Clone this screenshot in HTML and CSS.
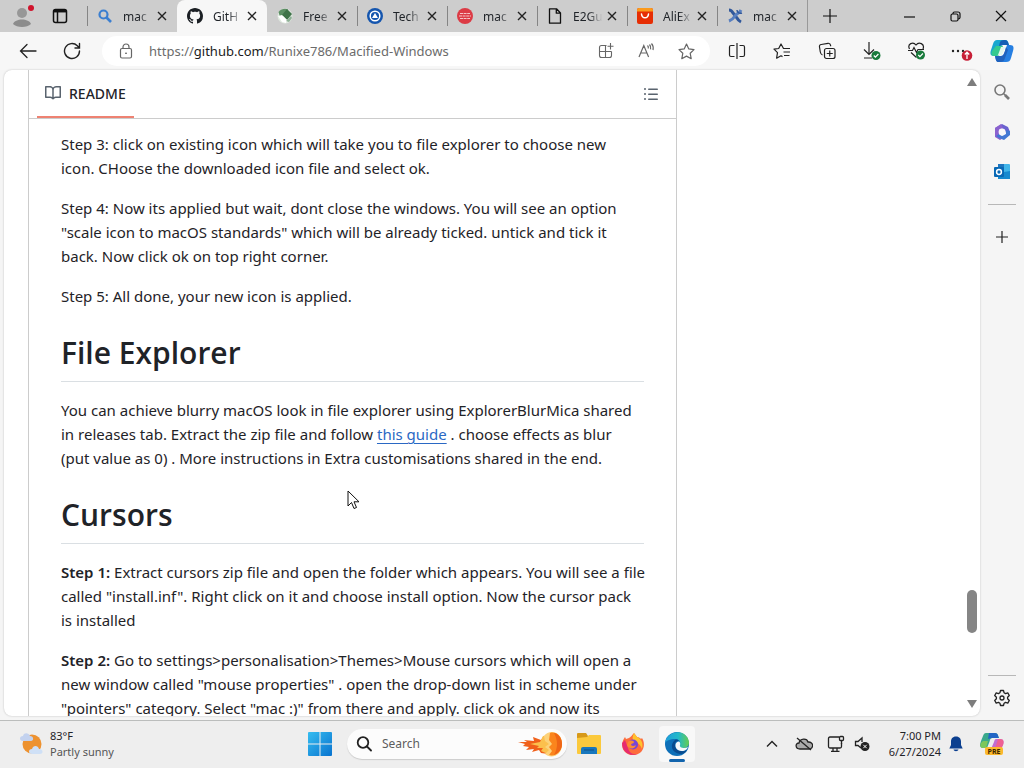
FILE: index.html
```html
<!DOCTYPE html>
<html lang="en">
<head>
<meta charset="utf-8">
<meta name="viewport" content="width=device-width, initial-scale=1">
<title>Runixe786/Macified-Windows</title>
<link rel="stylesheet" href="styles.css">
</head>
<body>
<div class="desktop">
  <header class="tabstrip">
    <button class="profile" aria-label="Profile">
      <svg width="24" height="24" viewBox="0 0 24 24"><circle cx="10" cy="9" r="5" fill="#979797"/><path d="M1 20c2-6 16-6 18 0-4 4-14 4-18 0z" fill="#8c8c8c"/><circle cx="19" cy="4" r="3" fill="#d0142c"/></svg>
    </button>
    <button class="workspace" aria-label="Tab actions">
      <svg width="16" height="16" viewBox="0 0 16 16" fill="none" stroke="#111" stroke-width="1.5"><rect x="1.5" y="1.5" width="13" height="13" rx="2"/><path d="M1.5 3.5h13M5.5 4v10" /><path d="M2 3h12" stroke-width="2.5"/></svg>
    </button>
    <nav class="tabs" aria-label="Tabs">
      <div class="tab"><svg class="favicon" viewBox="0 0 16 16" fill="none" stroke="#3c7fd0"><circle cx="6.500" cy="6.500" r="4" stroke-width="2.200"/><path d="M9.500 9.500l4.500 4.500" stroke-width="2.600"/></svg><a href="#" class="label">mac</a><button class="close" aria-label="Close tab"><svg viewBox="0 0 10 10"><path d="M1 1l8 8M9 1l-8 8"/></svg></button></div>
      <div class="tab active"><svg class="favicon" viewBox="0 0 16 16" fill="#1b1f24"><path d="M8 0C3.580 0 0 3.580 0 8c0 3.540 2.290 6.530 5.470 7.590.4.070.55-.17.55-.38 0-.19-.01-.82-.01-1.490-2.010.37-2.530-.49-2.690-.94-.09-.23-.48-.94-.82-1.130-.28-.15-.68-.52-.01-.53.63-.01 1.080.58 1.230.82.72 1.210 1.870.87 2.330.66.070-.52.28-.87.51-1.070-1.780-.2-3.640-.89-3.640-3.950 0-.87.31-1.590.82-2.150-.08-.2-.36-1.020.08-2.120 0 0 .67-.21 2.200.82.64-.18 1.320-.27 2-.27s1.360.09 2 .27c1.530-1.040 2.200-.82 2.200-.82.44 1.100.16 1.920.08 2.120.51.56.82 1.270.82 2.150 0 3.070-1.870 3.750-3.650 3.950.29.25.54.73.54 1.480 0 1.070-.01 1.930-.01 2.200 0 .21.15.46.55.38A8.010 8.010 0 0016 8c0-4.420-3.580-8-8-8z"/></svg><a href="#" class="label">GitH</a><button class="close" aria-label="Close tab"><svg viewBox="0 0 10 10"><path d="M1 1l8 8M9 1l-8 8"/></svg></button></div>
      <div class="tab"><svg class="favicon" viewBox="0 0 16 16"><circle cx="8" cy="8" r="7.500" fill="#dfe9df"/><path d="M1.500 4C4 1 8 0 11 1.500L7 8 3 9z" fill="#5c8f64"/><path d="M5 7l5-6 5 5-5 6z" fill="#3f7349"/><path d="M1 8l4 6 4 1 1-3-5-5z" fill="#fff"/><path d="M9 13l5-5 1 2-3 4z" fill="#8fb096"/></svg><a href="#" class="label">Free</a><button class="close" aria-label="Close tab"><svg viewBox="0 0 10 10"><path d="M1 1l8 8M9 1l-8 8"/></svg></button></div>
      <div class="tab"><svg class="favicon" viewBox="0 0 16 16"><circle cx="8" cy="8" r="8" fill="#1455ae"/><circle cx="8" cy="8" r="4.800" fill="none" stroke="#fff" stroke-width="1.500"/><path d="M8 5l3 5H5z" fill="#fff"/></svg><a href="#" class="label">Tech</a><button class="close" aria-label="Close tab"><svg viewBox="0 0 10 10"><path d="M1 1l8 8M9 1l-8 8"/></svg></button></div>
      <div class="tab"><svg class="favicon" viewBox="0 0 16 16"><circle cx="8" cy="8" r="8" fill="#dc3b45"/><path d="M3 5.500h10M2 8h12M3 10.500h10" stroke="#f6c5c8" stroke-width="1.200" stroke-dasharray="3 .6"/></svg><a href="#" class="label">mac</a><button class="close" aria-label="Close tab"><svg viewBox="0 0 10 10"><path d="M1 1l8 8M9 1l-8 8"/></svg></button></div>
      <div class="tab"><svg class="favicon" viewBox="0 0 16 16" fill="none" stroke="#111" stroke-width="1.300" stroke-linejoin="round"><path d="M2.500.8h7l4 4.200v10.200h-11zM9.300 1v4.200h4"/></svg><a href="#" class="label">E2Gu</a><button class="close" aria-label="Close tab"><svg viewBox="0 0 10 10"><path d="M1 1l8 8M9 1l-8 8"/></svg></button></div>
      <div class="tab"><svg class="favicon" viewBox="0 0 16 16"><rect width="16" height="16" rx="2" fill="#e62e04"/><path d="M0 2a2 2 0 012-2h12a2 2 0 012 2v1.500H0z" fill="#fb9a1c"/><path d="M4.500 6c.5 5 6.500 5 7 0" fill="none" stroke="#fff" stroke-width="1.500" stroke-linecap="round"/></svg><a href="#" class="label">AliEx</a><button class="close" aria-label="Close tab"><svg viewBox="0 0 10 10"><path d="M1 1l8 8M9 1l-8 8"/></svg></button></div>
      <div class="tab"><svg class="favicon" viewBox="0 0 16 16" fill="none"><path d="M2 2c2 0 3 1 4 3l4 5c1 2 2 3 4 4" stroke="#31589b" stroke-width="3"/><path d="M14 2c-2 4-4 3-6 6-2 3-3 4-6 5" stroke="#587fc0" stroke-width="3"/><path d="M10 2c0 2 2 4 5 3" stroke="#31589b" stroke-width="1.500"/></svg><a href="#" class="label">mac</a><button class="close" aria-label="Close tab"><svg viewBox="0 0 10 10"><path d="M1 1l8 8M9 1l-8 8"/></svg></button></div>
    </nav>
    <button class="newtab" aria-label="New tab"><svg width="14" height="14" viewBox="0 0 14 14" stroke="#111" stroke-width="1.200"><path d="M7 0v14M0 7h14"/></svg></button>
    <div class="winctl">
      <button aria-label="Minimize"><svg width="11" height="11" viewBox="0 0 11 11" stroke="#111" stroke-width="1.200"><path d="M0 6h11"/></svg></button>
      <button aria-label="Restore"><svg width="11" height="11" viewBox="0 0 11 11" fill="none" stroke="#111" stroke-width="1.200"><rect x="1" y="3" width="7" height="7" rx="1.500"/><path d="M3 3V2.500Q3 1 4.500 1H8q2 0 2 2v3.500Q10 8 8 8"/></svg></button>
      <button aria-label="Close"><svg width="12" height="12" viewBox="0 0 12 12" stroke="#111" stroke-width="1.200"><path d="M1 1l10 10M11 1L1 11"/></svg></button>
    </div>
  </header>

  <div class="toolbar">
    <button class="nav" aria-label="Back"><svg width="18" height="16" viewBox="0 0 18 16" fill="none" stroke="#222" stroke-width="1.300" stroke-linecap="round"><path d="M17 8H1.500M8 1.500L1.500 8 8 14.500"/></svg></button>
    <button class="nav" aria-label="Refresh"><svg width="18" height="18" viewBox="0 0 18 18" fill="none" stroke="#222" stroke-width="1.400" stroke-linecap="round"><path d="M16.500 9A7.500 7.500 0 1114.300 3.700L16.500 6M16.500 1.500V6H12"/></svg></button>
    <div class="address">
      <svg class="lock" width="14" height="16" viewBox="0 0 14 16" fill="none" stroke="#666" stroke-width="1.200"><rect x="1.500" y="5.500" width="11" height="9.500" rx="1.500"/><path d="M4 5.500V4a3 3 0 016 0v1.500"/><circle cx="7" cy="10.300" r=".8" fill="#333" stroke="none"/></svg>
      <div class="url">https://<b>github.com</b>/Runixe786/Macified-Windows</div>
      <button aria-label="Install app"><svg width="16" height="16" viewBox="0 0 16 16" fill="none" stroke="#666" stroke-width="1.100"><path d="M8.500 2.500h-5q-2 0-2 2v8q0 2 2 2h8q2 0 2-2v-4M7.500 2.500v12M1.500 8.500h12M12.500 0v6.500M9.500 3.200h6"/></svg></button>
      <button aria-label="Read aloud"><svg width="17" height="16" viewBox="0 0 17 16" fill="none" stroke="#666" stroke-width="1.200"><path d="M1 14L5.800 2.500 10.600 14M2.700 10h6.200M9.500 2.500c.8.700 1 1.800.8 3M11.500 1.500c1.200 1.400 1.500 3 1.100 4.800M13.500.5c1.700 2 2 4.300 1.500 6.500"/></svg></button>
      <button aria-label="Add to favorites"><svg width="17" height="17" viewBox="0 0 17 17" fill="none" stroke="#666" stroke-width="1.200" stroke-linejoin="round"><path d="M8.500 1l2.300 4.900 5.200.7-3.800 3.700 1 5.400-4.700-2.600-4.700 2.600 1-5.400L1 6.600l5.200-.7z"/></svg></button>
    </div>
    <div class="actions">
      <button aria-label="Split screen"><svg width="18" height="16" viewBox="0 0 18 16" fill="none" stroke="#222" stroke-width="1.200"><path d="M6.500 2.500H3q-1.500 0-1.500 1.500v8q0 1.500 1.500 1.500h3.500M11.500 2.500H15q1.500 0 1.500 1.500v8q0 1.500-1.500 1.500h-3.500M9 0v16"/></svg></button>
      <button aria-label="Favorites"><svg width="18" height="17" viewBox="0 0 18 17" fill="none" stroke="#222" stroke-width="1.200" stroke-linejoin="round"><path d="M17 5.500h-6.500L8 1 5.700 5.500 1 6.200l3.500 3.500-.9 5.500L8 12.800l1.500.8M10.500 9H17M11 12.500h5.500"/></svg></button>
      <button aria-label="Collections"><svg width="18" height="18" viewBox="0 0 18 18" fill="none" stroke="#222" stroke-width="1.200"><rect x="6.500" y="6.500" width="10.500" height="10" rx="2"/><path d="M11.750 8.500v6M8.750 11.500h6M4.500 13C3 12.500 2.600 11.500 2.300 10L1.500 5c-.3-1.500.4-2.300 1.700-2.500L10 1.300c1.500-.2 2.300.4 2.600 2v1"/></svg></button>
      <button aria-label="Downloads"><svg width="20" height="20" viewBox="0 0 20 20" fill="none" stroke="#222" stroke-width="1.200"><path d="M7 1v12M2 8.500L7 13.500l5-5M2 17h8"/><circle cx="14" cy="14.500" r="4.500" fill="#187a3b" stroke="none"/><path d="M11.800 14.500l1.600 1.700 3-3.200" stroke="#fff"/></svg></button>
      <button aria-label="Browser essentials"><svg width="20" height="20" viewBox="0 0 20 20" fill="none" stroke="#222" stroke-width="1.200"><path d="M2.500 8C0 3 6 0 9 4c3-4 9-1 7 4M1 9.500h4.500l1.500-3 2.500 5 1.500-3h6M4 11.500l5.500 5"/><circle cx="13.500" cy="14" r="4.500" fill="#187a3b" stroke="none"/><path d="M11.300 14l1.600 1.700 3-3.200" stroke="#fff"/></svg></button>
      <button aria-label="Settings and more"><svg width="22" height="20" viewBox="0 0 22 20"><g fill="#222"><circle cx="2" cy="10" r="1.200"/><circle cx="7" cy="10" r="1.200"/><circle cx="12" cy="10" r="1.200"/></g><circle cx="16" cy="14.500" r="5.300" fill="#c71f37"/><path d="M16 18v-6.500M13.800 13.500l2.200-2.300 2.200 2.300" fill="none" stroke="#fff" stroke-width="1.300"/></svg></button>
    </div>
    <button class="copilot" aria-label="Copilot"><svg width="24" height="24" viewBox="0 0 24 24"><path d="M7 1h8c3 0 3 2 4 5H13c-2 0-3 2-4 6l-1 3c-1 2-2 2-4 2-4 0-4-3-3-6l2-6c1-3 2-4 4-4z" fill="#19a7cf"/><path d="M6 7h7l-3 8c-1 2-3 2-5 2-4 0-4-2-3-5z" fill="#35c990"/><path d="M14 1c3 0 4 1 5 5h-6L9 7l1-4c.7-1.300 2-2 4-2z" fill="#155eb5"/><path d="M17 6h3c4 0 4 3 3 6l-2 7c-1 3-2 4-5 4H9c-3 0-3-2-4-6h6c2 0 3-2 4-5z" fill="#267fe2"/><path d="M5 17h6c2 0 3-2 4-5l1-4 2 3-3 8c-1 3-2 4-5 4H9c-3 0-3-2-4-6z" fill="#2162bd"/><path d="M11 8h4l-3 8H8z" fill="#e4f6ed"/></svg></button>
  </div>

  <div class="workarea">
    <main class="page">
      <div class="repo">
        <article class="readme">
          <div class="readme-head">
            <a href="#" class="readme-tab"><svg width="16" height="16" viewBox="0 0 16 16" fill="#59636e"><path d="M0 1.750A.75.75 0 01.75 1h4.253c1.227 0 2.317.59 3 1.501A3.743 3.743 0 0111.006 1h4.245a.75.75 0 01.75.75v10.500a.75.75 0 01-.75.75h-4.507a2.250 2.250 0 00-1.591.659l-.622.621a.75.75 0 01-1.060 0l-.622-.621A2.250 2.250 0 005.258 13H.75a.75.75 0 01-.75-.75zm7.251 10.324l.004-5.073-.002-2.253A2.250 2.250 0 005.003 2.500H1.500v9h3.757a3.750 3.750 0 011.994.574zM8.755 4.750l-.004 7.322a3.752 3.752 0 011.992-.572H14.500v-9h-3.495a2.250 2.250 0 00-2.250 2.250z"/></svg>README</a>
            <button class="outline" aria-label="Outline"><svg width="16" height="16" viewBox="0 0 16 16" fill="#59636e"><path d="M5.750 2.500h8.500a.75.75 0 010 1.500h-8.500a.75.75 0 010-1.500zm0 5h8.500a.75.75 0 010 1.500h-8.500a.75.75 0 010-1.500zm0 5h8.500a.75.75 0 010 1.500h-8.500a.75.75 0 010-1.500zM2 14a1 1 0 110-2 1 1 0 010 2zm1-6a1 1 0 11-2 0 1 1 0 012 0zM2 4a1 1 0 110-2 1 1 0 010 2z"/></svg></button>
          </div>
          <div class="markdown">
            <p>Step 3: click on existing icon which will take you to file explorer to choose new<br>icon. CHoose the downloaded icon file and select ok.</p>
            <p>Step 4: Now its applied but wait, dont close the windows. You will see an option<br>"scale icon to macOS standards" which will be already ticked. untick and tick it<br>back. Now click ok on top right corner.</p>
            <p>Step 5: All done, your new icon is applied.</p>
            <h1>File Explorer</h1>
            <p>You can achieve blurry macOS look in file explorer using ExplorerBlurMica shared<br>in releases tab. Extract the zip file and follow <a href="#">this guide</a> . choose effects as blur<br>(put value as 0) . More instructions in Extra customisations shared in the end.</p>
            <h1>Cursors</h1>
            <p><strong>Step 1:</strong> Extract cursors zip file and open the folder which appears. You will see a file<br>called "install.inf". Right click on it and choose install option. Now the cursor pack<br>is installed</p>
            <p><strong>Step 2:</strong> Go to settings&gt;personalisation&gt;Themes&gt;Mouse cursors which will open a<br>new window called "mouse properties" . open the drop-down list in scheme under<br>"pointers" category. Select "mac :)" from there and apply. click ok and now its</p>
          </div>
        </article>
      </div>
      <div class="scrollbar" aria-hidden="true">
        <svg width="10" height="8" viewBox="0 0 10 8" fill="#7d7d7d"><path d="M5 0l5 8H0z"/></svg>
        <div class="track"><div class="before"></div><div class="thumb"></div><div class="after"></div></div>
        <svg width="10" height="8" viewBox="0 0 10 8" fill="#7d7d7d"><path d="M5 8l5-8H0z"/></svg>
      </div>
    </main>
    <aside class="sidebar">
      <button aria-label="Search"><svg width="16" height="16" viewBox="0 0 16 16" fill="none" stroke="#777"><circle cx="6" cy="6" r="5" stroke-width="1.600"/><path d="M9.500 9.500l2 2" stroke-width="1.500"/><path d="M11 11l4 4" stroke-width="2.600"/></svg></button>
      <button aria-label="Microsoft 365"><svg width="18" height="18" viewBox="0 0 18 18"><path d="M9 1l6 3 2 5-4 1-1-3-4-2-4 2-2-2z" fill="#6a62cf"/><path d="M2 5l6-4 2 4-4 2v5l4 3-3 2-5-3z" fill="#8b62cf"/><path d="M17 8v4l-6 5-5-2-3-2 3-2 3 2 4-2V7z" fill="#4277d4"/><circle cx="9" cy="9" r="3.400" fill="#f7f7fa"/></svg></button>
      <button aria-label="Outlook"><svg width="18" height="18" viewBox="0 0 18 18"><rect x="5" y="1" width="12" height="15" rx="1" fill="#41b5e9"/><path d="M5 1h6v5H5z" fill="#1d75bf"/><path d="M5 10l12-2v8H5z" fill="#1689cf"/><rect x="1" y="4" width="10" height="10" rx="1" fill="#0868b5"/><circle cx="6" cy="9" r="2.400" fill="none" stroke="#fff" stroke-width="1.500"/></svg></button>
      <hr>
      <button aria-label="Customize"><svg width="14" height="14" viewBox="0 0 14 14" stroke="#222" stroke-width="1.200"><path d="M7 1v12M1 7h12"/></svg></button>
      <div class="fill"></div>
      <hr>
      <button aria-label="Settings"><svg width="18" height="18" viewBox="0 0 18 18" fill="none" stroke="#222" stroke-width="1.300" stroke-linejoin="round"><path d="M7.500 1.500h3l.6 2.300 1.400.8 2.300-.7 1.500 2.600L14.600 8.200v1.600l1.700 1.700-1.500 2.600-2.300-.7-1.400.8-.6 2.300h-3l-.6-2.300-1.400-.8-2.300.7-1.500-2.600 1.700-1.700V8.200L1.700 6.500l1.500-2.600 2.300.7 1.400-.8z"/><circle cx="9" cy="9" r="2"/></svg></button>
    </aside>
  </div>

  <footer class="taskbar">
    <button class="weather">
      <svg width="24" height="24" viewBox="0 0 24 24"><circle cx="13" cy="12" r="9.500" fill="#ed9230"/><path d="M4 9c-4 0-4-5 0-5 1-4 6-3 7 0 4 0 4 5 1 5z" fill="#c3d2ef"/><path d="M13 22c-4 0-4-5 0-5 1-4 6-4 7 0 4-.500 5 5 1 5z" fill="#cfe0f6"/></svg>
      <span class="two"><span>83°F</span><span class="dim">Partly sunny</span></span>
    </button>
    <div class="apps">
      <button class="app" aria-label="Start"><svg width="24" height="24" viewBox="0 0 24 24"><defs><linearGradient id="win" x2="1" y2="1"><stop stop-color="#36bdf0"/><stop offset="1" stop-color="#0873cf"/></linearGradient></defs><path d="M0 1q0-1 1-1h10.500v11.500H0zM12.500 0H23q1 0 1 1v10.500H12.500zM0 12.500h11.500V24H1q-1 0-1-1zM12.500 12.500H24V23q0 1-1 1H12.500z" fill="url(#win)"/></svg></button>
      <label class="search">
        <svg width="16" height="16" viewBox="0 0 16 16" fill="none" stroke="#222" stroke-width="1.800" stroke-linecap="round"><circle cx="7" cy="6.500" r="5.300"/><path d="M11 10.500l4 4"/></svg>
        <input type="text" placeholder="Search" aria-label="Search">
        <svg width="46" height="26" viewBox="0 0 46 26"><path d="M1 11l9 0-3-2 10 1-1-4 8 3 2-3 5 1v16l-7-1-2-3-7 2 2-3-8 1 3-3-6-1 2-2z" fill="#f0601a"/><path d="M13 13l10-2 3-6 7-1v20l-9-4 2-3-6 0 2-2z" fill="#fbc04d"/><path d="M27 5c5-7 18-5 18 8s-12 15-17 10l4-4-4-3 4-3-4-3z" fill="#fcd27a"/><path d="M33 2c6-2 12 3 12 11s-7 13-13 11l3-4-3-4 3-3-3-4z" fill="#fb851d"/><path d="M37 2c5 1 8 6 8 11s-3 9-8 11c4-7 4-15 0-22z" fill="#ef6616"/></svg>
      </label>
      <button class="app" aria-label="File Explorer"><svg width="26" height="24" viewBox="0 0 26 24"><path d="M1 2q0-1 1-1h8l2 3v4H1z" fill="#d79919"/><path d="M1 6l10-1 2-2h11q1 0 1 1v17q0 1-1 1H2q-1 0-1-1z" fill="#fbc93c"/><path d="M5 22v-5q0-2 2-2h12q2 0 2 2v5z" fill="#1877bd"/><path d="M8 18h10" stroke="#135d98" stroke-width="1.500"/></svg></button>
      <button class="app" aria-label="Firefox"><svg width="24" height="24" viewBox="0 0 24 24"><path d="M4 5l1 2 3-1c2-1 3-3 5-5l3 4c2 0 3 1 4 2l1-1c4 6 2 17-9 17C2 23-2 13 4 5z" fill="#fd6c3c"/><path d="M13 1l3 4c3 1 7 5 5 12-2-5-5-7-9-9-1-2 0-5 1-7z" fill="#ffc32d"/><path d="M1 11c0 9 8 14 16 11-6 1-9-2-10-6L4 8z" fill="#e62b70"/><circle cx="12" cy="12.500" r="5" fill="#7846d5"/><path d="M7 10c3-3 6-1 6 0 0 2-3 1-3 3 2 2 5 0 5 0-1 5-8 4-9 0z" fill="#fb8c32"/></svg></button>
      <button class="app current" aria-label="Microsoft Edge"><svg width="24" height="24" viewBox="0 0 24 24"><defs><linearGradient id="sea" x2="1"><stop stop-color="#209dda"/><stop offset=".55" stop-color="#22b9c9"/><stop offset="1" stop-color="#65cd50"/></linearGradient></defs><circle cx="12" cy="12" r="12" fill="#0d6fb8"/><path d="M0 11C1-1 21-5 24 10c0 4-2 6-6 6-3 0-4-2-3-4 1-3-2-5-5-5-5 0-9 2-10 4z" fill="url(#sea)"/><path d="M10 8c-6 5-3 13 5 14 4 0 6-2 7-4-6 3-12 0-12-5 0-3 1-4 4-4-1-1-2-2-4-1z" fill="#084b8f"/><path d="M14 9.500c-4 0-5 6-1 8.500 3 2 7 1 9-1l1-2c-3 2-9 1-8-2 .6-1 0-3-1-3.500z" fill="#f6f8fa"/></svg></button>
    </div>
    <div class="tray">
      <button aria-label="Show hidden icons"><svg width="12" height="12" viewBox="0 0 12 12" fill="none" stroke="#222" stroke-width="1.400"><path d="M1 8.500l5-5 5 5"/></svg></button>
      <button class="wide" aria-label="OneDrive"><svg width="18" height="16" viewBox="0 0 18 16" fill="#aaa" stroke="#222" stroke-width="1.300"><path d="M5 13c-5 0-5-6-1-6 1-5 8-5 9-1 6-.500 6 7 1 7z"/><path d="M2 2l14 12"/></svg></button>
      <button aria-label="Network"><svg width="18" height="18" viewBox="0 0 18 18" fill="none" stroke="#222" stroke-width="1.300"><path d="M12 2H3q-1.500 0-1.500 1.500v8Q1.500 13 3 13h10q1.500 0 1.500-1.500V8M6 13v3M10 13v3M4 16.300h8.500"/><rect x="12.500" y="1.500" width="4" height="4" rx="1"/><path d="M14.500 5.500V9"/></svg></button>
      <button class="narrow" aria-label="Volume"><svg width="16" height="16" viewBox="0 0 16 16" fill="none" stroke="#222" stroke-width="1.300"><path d="M7 12L4 9.500H1.500v-4H4L8 2v4"/><circle cx="11" cy="10.500" r="4.500" fill="#222" stroke="none"/><path d="M9.300 8.800l3.400 3.400M12.700 8.800l-3.400 3.400" stroke="#fff" stroke-width="1"/></svg></button>
      <button class="clock two"><span>7:00 PM</span><span>6/27/2024</span></button>
      <button class="bell" aria-label="Notifications"><svg width="14" height="16" viewBox="0 0 14 16" fill="#0b3f8f"><path d="M7 .5c3.500 0 5 2.500 5 5V9l1.700 3.500H.3L2 9V5.500C2 3 3.500.5 7 .5zM4.500 13.500h5c-.5 2.200-4.500 2.200-5 0z"/></svg></button>
      <button class="pre" aria-label="Copilot preview"><svg width="26" height="26" viewBox="0 0 26 26"><path d="M7 2h9c3 0 3 3 4 5h-7c-2 0-2 3-3 5l-2 5H4c-4 0-3-4-2-7l2-5c.7-2 1.500-3 3-3z" fill="#39a98c"/><path d="M10 2h6c3 0 3 3 4 5h-7l-4 1z" fill="#2265c5"/><path d="M4 10h5l-2 7H4c-3 0-3-3-2-5z" fill="#7cc75b"/><path d="M17 8h4c4 0 4 3 3 6l-2 4H12l3-7c.5-2 1-3 2-3z" fill="#c26dd1"/><path d="M19 8h2c4 0 4 3 3 6l-2 4h-6z" fill="#ee6193"/><rect x="6" y="16" width="18" height="8" rx="2" fill="#fcb92c"/><text x="15" y="22.500" text-anchor="middle" class="badge-text">PRE</text></svg></button>
    </div>
  </footer>
  <svg class="cursor" width="13" height="20" viewBox="0 0 13 20"><path d="M1 1v15l3.500-3.500 2.500 6 2.500-1-2.500-5.700h5z" fill="#fff" stroke="#111" stroke-width="1"/></svg>
</div>
</body>
</html>
```

FILE: styles.css
```css
* { box-sizing: border-box; }
body { margin: 0; font-family: "Noto Sans", "Open Sans", sans-serif; color: #1f2328; }
button { border: 0; background: none; padding: 0; margin: 0; font: inherit; color: inherit; display: flex; align-items: center; justify-content: center; flex: none; }
a { color: inherit; text-decoration: none; }
svg { display: block; flex: none; }

.desktop { position: relative; display: flex; flex-direction: column; height: 100vh; background: #f5f5f5; overflow: hidden; }

.tabstrip { display: flex; flex: none; height: 32px; background: #cdcdcd; }
.profile { width: 48px; }
.workspace { width: 24px; margin-right: 15px; }
.tabs { display: flex; min-width: 0; }
.tab { display: flex; align-items: center; width: 90px; min-width: 0; padding: 0 7px 0 10px; background: linear-gradient(#858585, #858585) left center / 1px 20px no-repeat; }
.tab.active { background: #f7f7f7; border-radius: 8px 8px 0 0; }
.tab.active + .tab { background: none; }
.tab:last-child { border-right: 1px solid #999; width: 91px; }
.favicon { width: 16px; height: 16px; }
.label { flex: 1; min-width: 0; margin: 0 0 0 10px; white-space: nowrap; font-size: 12px; mask-image: linear-gradient(to right, #000 50%, transparent 95%); }
.close { width: 16px; height: 16px; }
.close svg { width: 10px; height: 10px; stroke: #222; stroke-width: 1.4; }
.newtab { width: 44px; }
.winctl { display: flex; margin-left: auto; }
.winctl button { width: 46px; }

.toolbar { display: flex; align-items: center; flex: none; height: 38px; padding: 0 4px 0 6px; background: #f7f7f7; }
.nav { width: 44px; height: 32px; }
.address { display: flex; align-items: center; flex: 1; min-width: 0; height: 30px; margin: 0 4px 0 8px; padding: 0 4px 0 17px; border-radius: 15px; background: #fff; }
.url { flex: 1; min-width: 0; margin-left: 16px; overflow: hidden; white-space: nowrap; font-size: 13px; color: #6b6b6b; }
.url b { font-weight: 400; color: #1b1b1b; }
.address button { width: 40px; height: 28px; }
.actions { display: flex; }
.actions button { width: 45px; height: 32px; }
.copilot { width: 36px; height: 32px; }

.workarea { display: flex; flex: 1; min-height: 0; }
.page { display: flex; flex: 1; min-width: 0; margin: 0 0 4px 4px; border-radius: 8px; background: #fff; overflow: hidden; box-shadow: 0 0 2px #bbb; }
.repo { flex: 1; min-width: 0; padding-left: 24px; overflow: hidden; }
.readme { max-width: 649px; min-height: 100%; border: solid #ccc; border-width: 0 1px; }
.readme-head { display: flex; justify-content: space-between; height: 49px; padding: 0 9px 0 8px; border-bottom: 1px solid #ccc; }
.readme-tab { display: flex; align-items: center; gap: 8px; padding: 0 8px; border-bottom: 2px solid #ee8272; font-size: 14px; font-weight: 500; }
.outline { width: 32px; }
.markdown { padding: 13px 32px 0; font-size: 15px; line-height: 24px; white-space: nowrap; }
.markdown p { margin: 0 0 16px; }
.markdown a { color: #2a68c4; text-decoration: underline; text-underline-offset: 3px; }
.markdown strong { font-weight: 600; }
.markdown h1 { margin: 24px 0 16px; padding-bottom: 8px; border-bottom: 1px solid #dadfe3; font-family: "Open Sans", sans-serif; font-size: 30px; line-height: 41px; font-weight: 600; }

.scrollbar { display: flex; flex-direction: column; align-items: center; width: 16px; padding: 8px 0; }
.track { display: flex; flex-direction: column; flex: 1; width: 10px; }
.before { flex: 504; }
.thumb { flex: 43; border-radius: 5px; background: #858585; }
.after { flex: 67; }

.sidebar { display: flex; flex-direction: column; align-items: center; flex: none; width: 44px; padding-bottom: 2px; }
.sidebar button { width: 32px; height: 40px; }
.sidebar button:first-child { margin-top: 2px; }
.sidebar hr { width: 28px; margin: 12px 0; border: 0; border-top: 1px solid #b8b8b8; }
.fill { flex: 1; }
.sidebar hr:last-of-type { margin: 0 0 2px; }

.taskbar { display: grid; grid-template-columns: 1fr auto 1fr; flex: none; height: 48px; padding-bottom: 2px; border-top: 1px solid #bbbdbc; background: #eee; font-size: 11px; line-height: 16px; }
.weather { justify-content: flex-start; gap: 7px; padding-left: 19px; }
.two { display: flex; flex-direction: column; align-items: flex-start; }
.dim { color: #555; }
.apps { display: flex; align-items: center; padding-right: 27px; }
.app { width: 36px; height: 36px; margin: 0 4px; }
.current { position: relative; border-radius: 4px; background: #f8f8f8; }
.current::after { content: ""; position: absolute; bottom: 0; width: 16px; height: 3px; border-radius: 2px; background: #1264ad; }
.search { display: flex; align-items: center; width: 220px; height: 30px; margin-left: 5px; padding: 0 4px 0 9px; border-radius: 15px; background: #fcfcfc; box-shadow: 0 1px 1px #ccc; }
.search input { flex: 1; min-width: 0; margin-left: 10px; padding: 0; border: 0; outline: 0; background: none; font: inherit; font-size: 12px; }
.search input::placeholder { color: #5d5d5d; opacity: 1; }
.tray { display: flex; align-items: stretch; justify-content: flex-end; padding-right: 17px; }
.tray button { width: 30px; }
.tray .wide { width: 34px; }
.tray .narrow { width: 22px; }
.tray .clock { width: 68px; align-items: flex-end; }
.tray .bell { width: 30px; }
.tray .pre { width: 30px; margin-left: 6px; }
.badge-text { font-family: "Open Sans", sans-serif; font-size: 7px; font-weight: 700; fill: #3a2500; }

.cursor { position: absolute; left: 347px; top: 490px; }
```
